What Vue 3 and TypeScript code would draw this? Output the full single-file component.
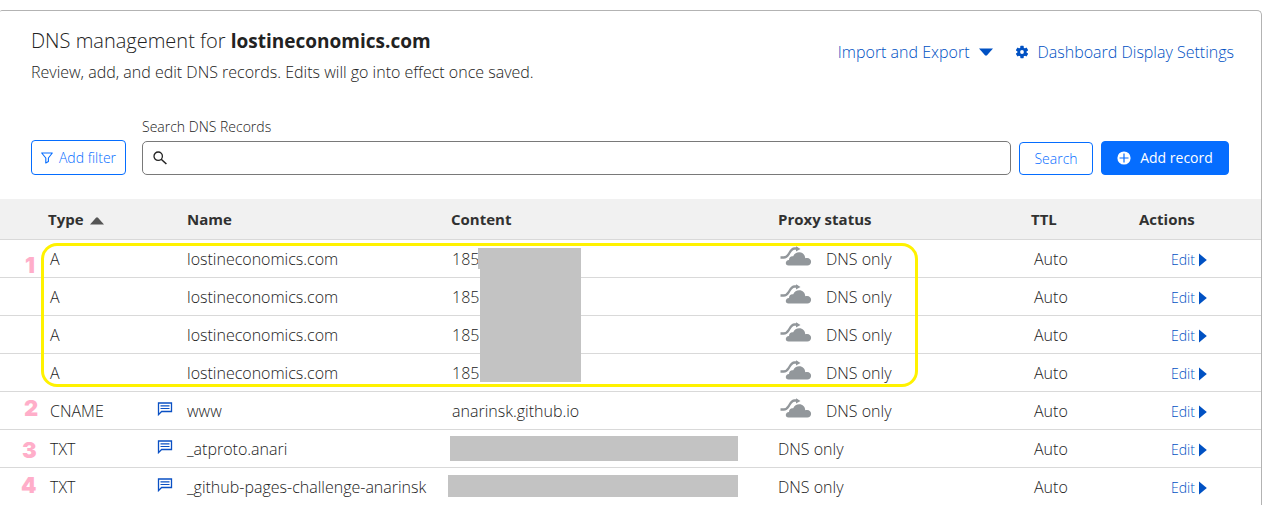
<script setup lang="ts">
import { ref } from 'vue'

interface DnsRecord {
  type: string
  comment: boolean
  name: string
  content: string
  cloud: boolean
}

const query = ref('')

const records: DnsRecord[] = [
  { type: 'A', comment: false, name: 'lostineconomics.com', content: '185.', cloud: true },
  { type: 'A', comment: false, name: 'lostineconomics.com', content: '185.', cloud: true },
  { type: 'A', comment: false, name: 'lostineconomics.com', content: '185.', cloud: true },
  { type: 'A', comment: false, name: 'lostineconomics.com', content: '185.', cloud: true },
  { type: 'CNAME', comment: true, name: 'www', content: 'anarinsk.github.io', cloud: true },
  { type: 'TXT', comment: true, name: '_atproto.anari', content: '', cloud: false },
  { type: 'TXT', comment: true, name: '_github-pages-challenge-anarinsk', content: '', cloud: false },
]
</script>

<template>
  <main class="card">
    <header class="top">
      <div>
        <h1>DNS management for <strong>lostineconomics.com</strong></h1>
        <p>Review, add, and edit DNS records. Edits will go into effect once saved.</p>
      </div>
      <nav class="links">
        <button type="button" class="link">
          Import and Export
          <svg class="caret" width="14" height="8" viewBox="0 0 14 8"><path d="M0 0.5h14L8 7.2q-1 .9-2 0z" fill="currentColor" /></svg>
        </button>
        <a href="#settings" class="link">
          <svg class="gear" width="14" height="14" viewBox="0 0 14 14">
            <g fill="currentColor">
              <rect x="5.3" y="0.8" width="3.4" height="12.4" rx="0.6" />
              <rect x="5.3" y="0.8" width="3.4" height="12.4" rx="0.6" transform="rotate(60 7 7)" />
              <rect x="5.3" y="0.8" width="3.4" height="12.4" rx="0.6" transform="rotate(120 7 7)" />
              <circle cx="7" cy="7" r="4.6" />
            </g>
            <circle cx="7" cy="7" r="1.9" fill="#fff" />
          </svg>
          Dashboard Display Settings
        </a>
      </nav>
    </header>

    <form class="tools" @submit.prevent>
      <button type="button" class="btn filter">
        <svg width="12" height="12" viewBox="0 0 12 12" fill="none" stroke="currentColor" stroke-width="1.1" stroke-linejoin="round"><path d="M0.7 1h10.6L7.4 6v3.6L4.8 11V6z" /></svg>
        Add filter
      </button>
      <div class="field">
        <label for="search">Search DNS Records</label>
        <div class="box">
          <svg width="14" height="14" viewBox="0 0 14 14" fill="none" stroke="#222"><circle cx="5.2" cy="5.2" r="4.2" stroke-width="1.3" /><path d="M8.2 8.2l5.2 4.8" stroke-width="1.5" /></svg>
          <input id="search" v-model="query" type="text" />
        </div>
      </div>
      <button type="submit" class="btn search">Search</button>
      <button type="button" class="btn add">
        <svg width="14" height="14" viewBox="0 0 14 14"><circle cx="7" cy="7" r="6.6" fill="#fff" /><path d="M7 2.500v9M2.500 7h9" stroke="#056dff" stroke-width="1.2" /></svg>
        Add record
      </button>
    </form>

    <div class="records">
      <table>
        <colgroup>
          <col class="c-type" /><col class="c-note" /><col class="c-name" /><col /><col class="c-proxy" /><col class="c-ttl" /><col class="c-act" />
        </colgroup>
        <thead>
          <tr>
            <th class="type" scope="col" colspan="2">
              Type <svg width="14" height="8" viewBox="0 0 14 8"><path d="M0 7.5L6 .8q1-.9 2 0L14 7.5z" fill="#555" /></svg>
            </th>
            <th scope="col">Name</th>
            <th scope="col">Content</th>
            <th scope="col">Proxy status</th>
            <th scope="col">TTL</th>
            <th scope="col">Actions</th>
          </tr>
        </thead>
        <tbody>
          <tr v-for="(r, i) in records" :key="i">
            <td class="type">{{ r.type }}</td>
            <td class="note">
              <svg v-if="r.comment" width="16" height="14" viewBox="0 0 16 14" fill="none" stroke="#0a50c4">
                <path d="M1.5 1h13v8.5H4.6L1.5 12.6z" stroke-width="1.3" />
                <path d="M3.5 3.9h9M3.5 6.5h9" stroke-width="1.2" />
              </svg>
            </td>
            <td>{{ r.name }}</td>
            <td class="content">
              <template v-if="r.content">{{ r.content }}</template>
              <span v-else class="redacted" :class="{ wide: i === 6 }"></span>
              <span v-if="i === 0" class="mask"></span>
            </td>
            <td>
              <span class="proxy">
                <svg v-if="r.cloud" width="32" height="20" viewBox="0 0 32 20">
                  <path d="M0.500 11.500h3.200c2.600 0 3.800-1.500 5-3.400C10.600 5 11.500 2.500 14.500 2.500h3" fill="none" stroke="#92979b" stroke-width="2.300" />
                  <path d="M16 0.300L20.500 2.900L16 5.600z" fill="#92979b" />
                  <path d="M8.600 19.500c-2 0-2.800-1.200-2.800-2.500 0-1.700 1.200-2.900 3.200-3.100 .1-2.800 2-4.100 4.200-3.600C14.300 7.600 16.500 6.300 19.200 6.300c3.500 0 5.900 2.500 6 6 .6-.3 1.300-.4 2-.3 2.300.2 3.900 1.600 3.900 3.700 0 2.200-1.600 3.800-3.800 3.800z" fill="#92979b" />
                </svg>
                DNS only
              </span>
            </td>
            <td class="ttl">Auto</td>
            <td class="act">
              <a href="#edit">Edit<svg width="8" height="14" viewBox="0 0 8 14"><path d="M0 0.500L7.800 7L0 13.500z" fill="currentColor" /></svg></a>
            </td>
          </tr>
        </tbody>
      </table>
      <div class="outline"></div>
      <span class="num n1">1</span>
      <span class="num n2">2</span>
      <span class="num n3">3</span>
      <span class="num n4">4</span>
    </div>
  </main>
</template>

<style>
body {
  margin: 0;
  background: #fff;
  overflow: hidden;
}
</style>

<style scoped>
.card {
  box-sizing: border-box;
  margin: 10px 1px 0 0;
  border: 1px solid #b3b3b3;
  border-width: 1px 1px 0 0;
  border-radius: 2px 5px 0 0;
  font-family: "Open Sans", "Noto Sans", sans-serif;
  font-size: 16px;
  font-weight: 340;
  line-height: 20px;
  color: #222;
}
.top {
  display: flex;
  justify-content: space-between;
  padding: 16px 27px 0 31px;
}
h1 {
  margin: 0;
  font-size: 20px;
  line-height: 28px;
  font-weight: 340;
}
h1 strong {
  font-size: 19px;
  font-weight: 700;
}
p {
  margin: 7px 0 0;
}
.links {
  display: flex;
  align-items: flex-start;
  gap: 22px;
  padding-top: 14px;
}
.link {
  display: flex;
  align-items: center;
  padding: 0;
  border: 0;
  background: none;
  color: #0051c3;
  font: inherit;
  line-height: 22px;
  text-decoration: none;
}
.caret {
  margin-left: 9px;
}
.gear {
  margin-right: 9px;
}
.tools {
  display: flex;
  align-items: flex-end;
  padding: 35px 32px 24px 31px;
  font-size: 14px;
}
.btn {
  box-sizing: border-box;
  display: flex;
  align-items: center;
  justify-content: center;
  height: 34px;
  padding: 0;
  border: 1px solid #056dff;
  border-radius: 4px;
  background: #fff;
  color: #056dff;
  font: inherit;
}
.filter {
  width: 95px;
  height: 35px;
  gap: 6px;
  margin-right: 16px;
}
.search {
  width: 74px;
  height: 33px;
  margin: 0 8px;
}
.add {
  width: 128px;
  gap: 9px;
  background: #056dff;
  color: #fff;
  font-weight: 400;
}
.field {
  flex: 1;
}
label {
  display: block;
  margin-bottom: 4px;
}
.box {
  box-sizing: border-box;
  display: flex;
  align-items: center;
  height: 34px;
  padding: 0 10px;
  border: 1px solid #797979;
  border-radius: 5px;
}
input {
  flex: 1;
  margin-left: 8px;
  border: 0;
  outline: 0;
  background: none;
  font: inherit;
}
.records {
  position: relative;
}
table {
  width: 100%;
  table-layout: fixed;
  border-collapse: separate;
  border-spacing: 0;
}
.c-type { width: 157px; }
.c-note { width: 30px; }
.c-name { width: 264px; }
.c-proxy { width: 253px; }
.c-ttl { width: 108px; }
.c-act { width: 122px; }
th, td {
  box-sizing: border-box;
  height: 38px;
  padding: 0;
  border-bottom: 1px solid #d9d9d9;
  text-align: left;
  white-space: nowrap;
}
th {
  height: 41px;
  background: #f1f1f1;
  color: #313131;
  font-size: 15px;
  font-weight: 700;
}
th.type {
  padding-left: 48px;
}
th svg {
  margin-left: 3px;
}
td.type {
  padding-left: 50px;
}
tbody tr:last-child td {
  height: 37px;
  border-bottom: 0;
}
.note svg {
  display: block;
  margin-bottom: 4px;
}
.content {
  position: relative;
  padding-left: 1px;
}
.redacted {
  display: block;
  width: 288px;
  height: 25px;
  margin-left: -2px;
  background: #c3c3c3;
}
.redacted.wide {
  width: 290px;
  height: 22px;
  margin: -2px 0 0 -4px;
}
.mask {
  position: absolute;
  z-index: 1;
  left: 29px;
  top: 8px;
  width: 101px;
  height: 134px;
  background: #c3c3c3;
}
.mask::before {
  content: "";
  position: absolute;
  left: -2px;
  top: 0;
  width: 2px;
  height: 21px;
  background: #c3c3c3;
}
.proxy {
  display: flex;
  align-items: center;
}
.proxy svg {
  margin: -5px 14px 0 2px;
}
.ttl {
  padding-left: 3px;
}
.act {
  padding-left: 32px;
}
.act a {
  display: flex;
  align-items: center;
  gap: 4px;
  padding-top: 2px;
  color: #0051c3;
  font-size: 14px;
  text-decoration: none;
}
.outline {
  position: absolute;
  box-sizing: border-box;
  left: 41px;
  right: 343px;
  top: 44px;
  height: 144px;
  border: 3px solid #fff200;
  border-radius: 16px;
}
.num {
  position: absolute;
  left: 25px;
  color: #ffaec9;
  font: 900 22px/22px Inter, "Liberation Sans", Arial, sans-serif;
}
.n1 { top: 55px; }
.n2 { top: 198px; left: 24px; }
.n3 { top: 240px; left: 22px; }
.n4 { top: 275px; left: 21px; }
</style>
